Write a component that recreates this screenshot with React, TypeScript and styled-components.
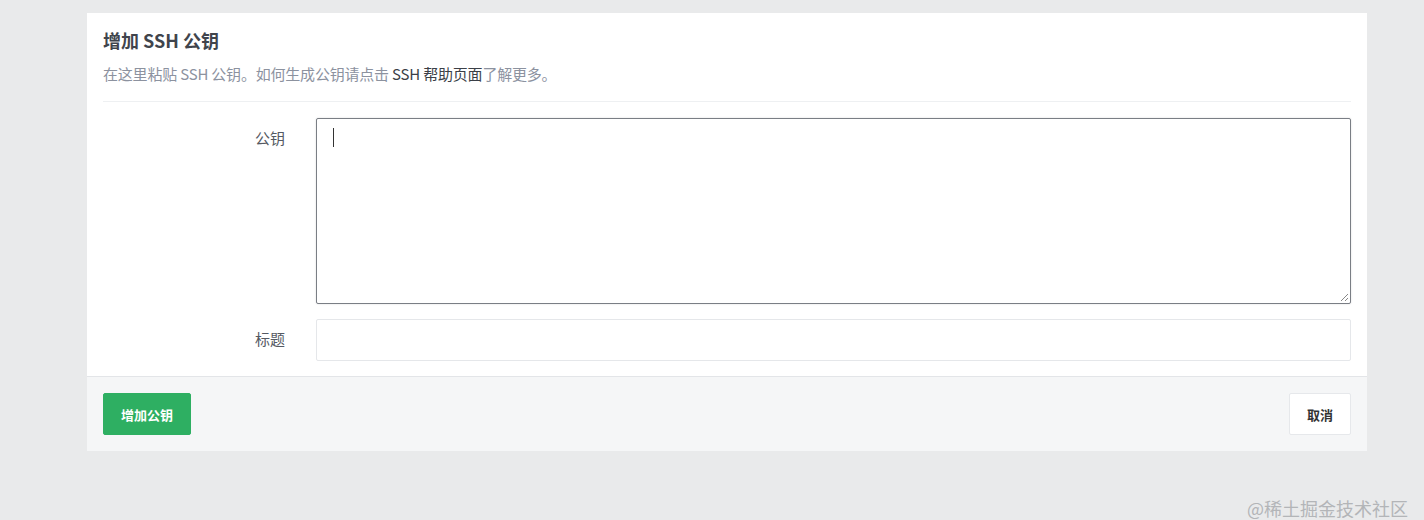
import React from "react";
import styled, { createGlobalStyle } from "styled-components";

const Global = createGlobalStyle`
  html, body { margin: 0; padding: 0; background: #e9eaeb; }
  body { font-family: "Noto Sans CJK SC", "Noto Sans", sans-serif; height: 520px; overflow: hidden; }
  * { box-sizing: border-box; }
`;

const Page = styled.div`
  position: relative;
  height: 520px;
  padding: 13px 57px 0 87px;
`;

const Card = styled.div`
  width: 1280px;
  background: #fff;
`;

const Body = styled.div`
  padding: 14px 16px 15px;
`;

const Title = styled.h3`
  margin: 0;
  font-size: 18px;
  line-height: 26px;
  font-weight: 700;
  color: #40444c;
`;

const Desc = styled.p`
  margin: 11px 0 0;
  font-size: 15px;
  letter-spacing: -0.2px;
  line-height: 20px;
  color: #8c929f;
  padding-bottom: 17px;
  border-bottom: 1px solid #eef0f2;
`;

const Link = styled.span`
  color: #3b3f47;
`;

const Row = styled.div<{ $top: number }>`
  display: grid;
  grid-template-columns: 182px 1fr;
  column-gap: 31px;
  margin-top: ${(p) => p.$top}px;
`;

const Label = styled.label`
  text-align: right;
  font-size: 15px;
  line-height: 20px;
  padding-top: 10px;
  color: #555a63;
`;

const TextArea = styled.div`
  position: relative;
  height: 186px;
  border: 1px solid #7a7e85;
  border-radius: 2px;
  box-shadow: 0 0 2px rgba(0, 0, 0, 0.15);
  background: #fff;
`;

const Caret = styled.span`
  position: absolute;
  left: 16px;
  top: 9px;
  width: 1px;
  height: 19px;
  background: #333;
`;

const Grip = styled.svg`
  position: absolute;
  right: 1px;
  bottom: 1px;
`;

const Input = styled.div`
  height: 42px;
  border: 1px solid #e5e7ea;
  border-radius: 2px;
  background: #fff;
`;

const Footer = styled.div`
  display: flex;
  justify-content: space-between;
  align-items: center;
  padding: 16px 16px;
  background: #f5f6f7;
  border-top: 1px solid #e3e5e8;
  height: 75px;
`;

const Button = styled.button<{ $primary?: boolean }>`
  height: 42px;
  padding: 0 17px;
  font-family: inherit;
  font-size: 13px;
  font-weight: 700;
  border-radius: 2px;
  cursor: pointer;
  color: ${(p) => (p.$primary ? "#fff" : "#333")};
  background: ${(p) => (p.$primary ? "#2eaf62" : "#fff")};
  border: 1px solid ${(p) => (p.$primary ? "#2eaf62" : "#e6e8eb")};
`;

const Watermark = styled.div`
  position: absolute;
  right: 16px;
  bottom: 0;
  font-size: 18px;
  line-height: 24px;
  color: #b3b5b8;
`;

export default function App() {
  return (
    <>
      <Global />
      <Page>
        <Card>
          <Body>
            <Title>增加 SSH 公钥</Title>
            <Desc>
              在这里粘贴 SSH 公钥。如何生成公钥请点击 <Link>SSH 帮助页面</Link>了解更多。
            </Desc>
            <Row $top={16}>
              <Label>公钥</Label>
              <TextArea>
                <Caret />
                <Grip width="10" height="10" viewBox="0 0 10 10">
                  <path d="M9 2 L2 9 M9 6 L6 9" stroke="#888" strokeWidth="1" />
                </Grip>
              </TextArea>
            </Row>
            <Row $top={15}>
              <Label>标题</Label>
              <Input />
            </Row>
          </Body>
          <Footer>
            <Button $primary>增加公钥</Button>
            <Button>取消</Button>
          </Footer>
        </Card>
        <Watermark>@稀土掘金技术社区</Watermark>
      </Page>
    </>
  );
}
